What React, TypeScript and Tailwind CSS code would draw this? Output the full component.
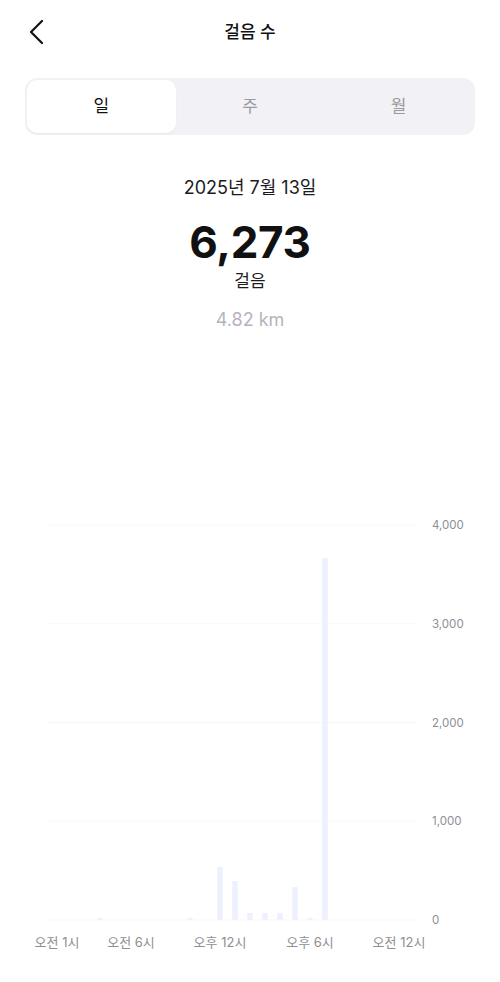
import React from "react";

const bars: Record<number, number> = {
  4: 2,
  10: 2,
  12: 53,
  13: 39,
  14: 7,
  15: 7,
  16: 7,
  17: 33,
  18: 2,
  19: 362,
};

const font = { fontFamily: 'Inter, "Noto Sans CJK KR", sans-serif' };

function Chart() {
  const base = 420;
  const grid = [0, 1, 2, 3, 4].map((i) => base - i * 98.75);
  const yLabels = ["0", "1,000", "2,000", "3,000", "4,000"];
  const xLabels = [
    { x: 57, t: "오전 1시" },
    { x: 131, t: "오전 6시" },
    { x: 220, t: "오후 12시" },
    { x: 310, t: "오후 6시" },
    { x: 399, t: "오전 12시" },
  ];
  return (
    <svg width="500" height="460" viewBox="0 0 500 460" className="block" style={font}>
      {grid.map((y, i) => (
        <line key={i} x1="48" x2="416" y1={y} y2={y} stroke="#f7f7f4" strokeWidth="1" />
      ))}
      {Object.entries(bars).map(([h, v]) => {
        const cx = 40 + Number(h) * 15;
        return (
          <rect key={h} x={cx - 2.75} y={base - v} width="5.5" height={v} rx="1" fill="#edf0fd" />
        );
      })}
      {yLabels.map((t, i) => (
        <text key={t} x="432" y={grid[i] + 4} fontSize="11.5" fill="#8e8e93">
          {t}
        </text>
      ))}
      {xLabels.map((l) => (
        <text key={l.t} x={l.x} y="447" fontSize="13" fill="#8e8e93" textAnchor="middle">
          {l.t}
        </text>
      ))}
    </svg>
  );
}

export default function App() {
  return (
    <div className="w-[500px] h-[982px] bg-white overflow-hidden text-black" style={font}>
      <div className="relative h-[64px] flex items-center justify-center">
        <svg
          className="absolute left-[27px] top-[19px]"
          width="20"
          height="26"
          viewBox="0 0 20 26"
          fill="none"
        >
          <path d="M15 2 L4 13 L15 24" stroke="#111" strokeWidth="2.2" strokeLinecap="round" strokeLinejoin="round" />
        </svg>
        <span className="text-[17px] font-medium leading-none text-[#111]">걸음 수</span>
      </div>
      <div className="mx-[25px] mt-[14px] h-[57px] rounded-[12px] bg-[#f2f2f6] p-[2px] grid grid-cols-3">
        <div className="rounded-[10px] bg-white flex items-center justify-center text-[17px] text-[#111] shadow-[0_1px_2px_rgba(0,0,0,0.04)]">
          일
        </div>
        <div className="flex items-center justify-center text-[17px] text-[#9a9aa0]">주</div>
        <div className="flex items-center justify-center text-[17px] text-[#9a9aa0]">월</div>
      </div>
      <div className="flex flex-col items-center">
        <div className="mt-[41px] text-[18px] leading-[24px] text-[#1c1c1e]">2025년 7월 13일</div>
        <div className="mt-[20px] text-[44px] leading-[44px] font-bold tracking-[-0.3px] text-[#111]">6,273</div>
        <div className="mt-[5px] text-[17px] leading-[24px] text-[#1c1c1e]">걸음</div>
        <div className="mt-[15px] text-[18px] leading-[24px] text-[#b4b4bc]">4.82 km</div>
      </div>
      <div className="mt-[168px]">
        <Chart />
      </div>
    </div>
  );
}
